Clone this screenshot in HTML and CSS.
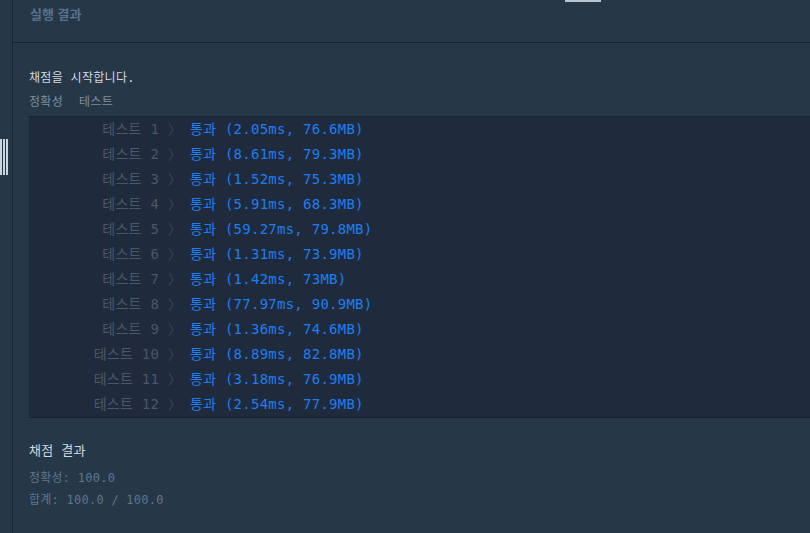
FILE: index.html
```html
<!DOCTYPE html>
<html lang="ko">
<head>
<meta charset="utf-8">
<title>실행 결과</title>
<link rel="stylesheet" href="styles.css">
</head>
<body>
<div class="app">
  <div class="sidebar">
    <div class="handle"><span></span><span></span><span></span></div>
  </div>
  <div class="main">
    <div class="top-indicator"></div>
    <div class="header"><h2 class="title">실행 결과</h2></div>
    <div class="content">
      <p class="msg">채점을 시작합니다.</p>
      <div class="tabs"><span class="tab">정확성</span><span class="tab">테스트</span></div>
      <div class="results">
        <div class="row"><span class="label">테스트 1 <i class="sep">〉</i></span><span class="passed">통과 (2.05ms, 76.6MB)</span></div>
        <div class="row"><span class="label">테스트 2 <i class="sep">〉</i></span><span class="passed">통과 (8.61ms, 79.3MB)</span></div>
        <div class="row"><span class="label">테스트 3 <i class="sep">〉</i></span><span class="passed">통과 (1.52ms, 75.3MB)</span></div>
        <div class="row"><span class="label">테스트 4 <i class="sep">〉</i></span><span class="passed">통과 (5.91ms, 68.3MB)</span></div>
        <div class="row"><span class="label">테스트 5 <i class="sep">〉</i></span><span class="passed">통과 (59.27ms, 79.8MB)</span></div>
        <div class="row"><span class="label">테스트 6 <i class="sep">〉</i></span><span class="passed">통과 (1.31ms, 73.9MB)</span></div>
        <div class="row"><span class="label">테스트 7 <i class="sep">〉</i></span><span class="passed">통과 (1.42ms, 73MB)</span></div>
        <div class="row"><span class="label">테스트 8 <i class="sep">〉</i></span><span class="passed">통과 (77.97ms, 90.9MB)</span></div>
        <div class="row"><span class="label">테스트 9 <i class="sep">〉</i></span><span class="passed">통과 (1.36ms, 74.6MB)</span></div>
        <div class="row"><span class="label">테스트 10 <i class="sep">〉</i></span><span class="passed">통과 (8.89ms, 82.8MB)</span></div>
        <div class="row"><span class="label">테스트 11 <i class="sep">〉</i></span><span class="passed">통과 (3.18ms, 76.9MB)</span></div>
        <div class="row"><span class="label">테스트 12 <i class="sep">〉</i></span><span class="passed">통과 (2.54ms, 77.9MB)</span></div>
      </div>
      <p class="summary-title">채점 결과</p>
      <p class="score">정확성: 100.0</p>
      <p class="score">합계: 100.0 / 100.0</p>
    </div>
  </div>
</div>
</body>
</html>
```
FILE: styles.css
```css
* { box-sizing: border-box; }
html, body {
  margin: 0;
  padding: 0;
  height: 100%;
  background: #263747;
  overflow: hidden;
}
body {
  font-family: "DejaVu Sans Mono", "Noto Sans CJK KR", monospace;
}
.app {
  display: flex;
  height: 533px;
}
.sidebar {
  width: 13px;
  flex: none;
  border-right: 1px solid #1b2736;
  padding-top: 139px;
}
.handle {
  display: flex;
  gap: 1px;
  height: 36px;
}
.handle span {
  width: 2px;
  height: 100%;
  background: #c9d4de;
}
.main {
  flex: 1;
  position: relative;
  min-width: 0;
}
.top-indicator {
  position: absolute;
  left: 552px;
  top: 0;
  width: 36px;
  height: 2px;
  background: #b9c6d2;
}
.header {
  height: 43px;
  border-bottom: 1px solid #17222f;
  padding-left: 17px;
}
.title {
  margin: 0;
  padding-top: 4px;
  font-family: "Noto Sans CJK KR", sans-serif;
  font-size: 13px;
  font-weight: 700;
  line-height: 20px;
  color: #58728c;
}
.content {
  padding-left: 16px;
}
.msg {
  margin: 26px 0 0;
  font-size: 12px;
  line-height: 18px;
  letter-spacing: 0.3px;
  color: #d3dae2;
}
.tabs {
  margin-top: 6px;
  display: flex;
  gap: 16px;
  font-size: 12px;
  line-height: 18px;
  letter-spacing: 0.3px;
  color: #7d8ea0;
}
.results {
  margin-top: 5px;
  background: #1f2b3c;
  border-top: 1px solid #172130;
  border-bottom: 1px solid #172130;
}
.row {
  display: grid;
  grid-template-columns: 153px auto;
  height: 25px;
  align-items: center;
  font-size: 14px;
  line-height: 25px;
  letter-spacing: 0.25px;
}
.label {
  text-align: right;
  color: #4b5767;
  white-space: pre;
}
.sep {
  font-style: normal;
  color: #3a4656;
}
.passed {
  padding-left: 8px;
  color: #1d7ef2;
  white-space: pre;
}
.summary-title {
  margin: 23px 0 0;
  font-size: 13px;
  line-height: 20px;
  letter-spacing: 0.2px;
  color: #d3dae2;
}
.summary-title + .score {
  margin-top: 6px;
}
.score {
  margin: 0;
  font-size: 12px;
  line-height: 22px;
  letter-spacing: 0.25px;
  color: #5d7690;
}
```
